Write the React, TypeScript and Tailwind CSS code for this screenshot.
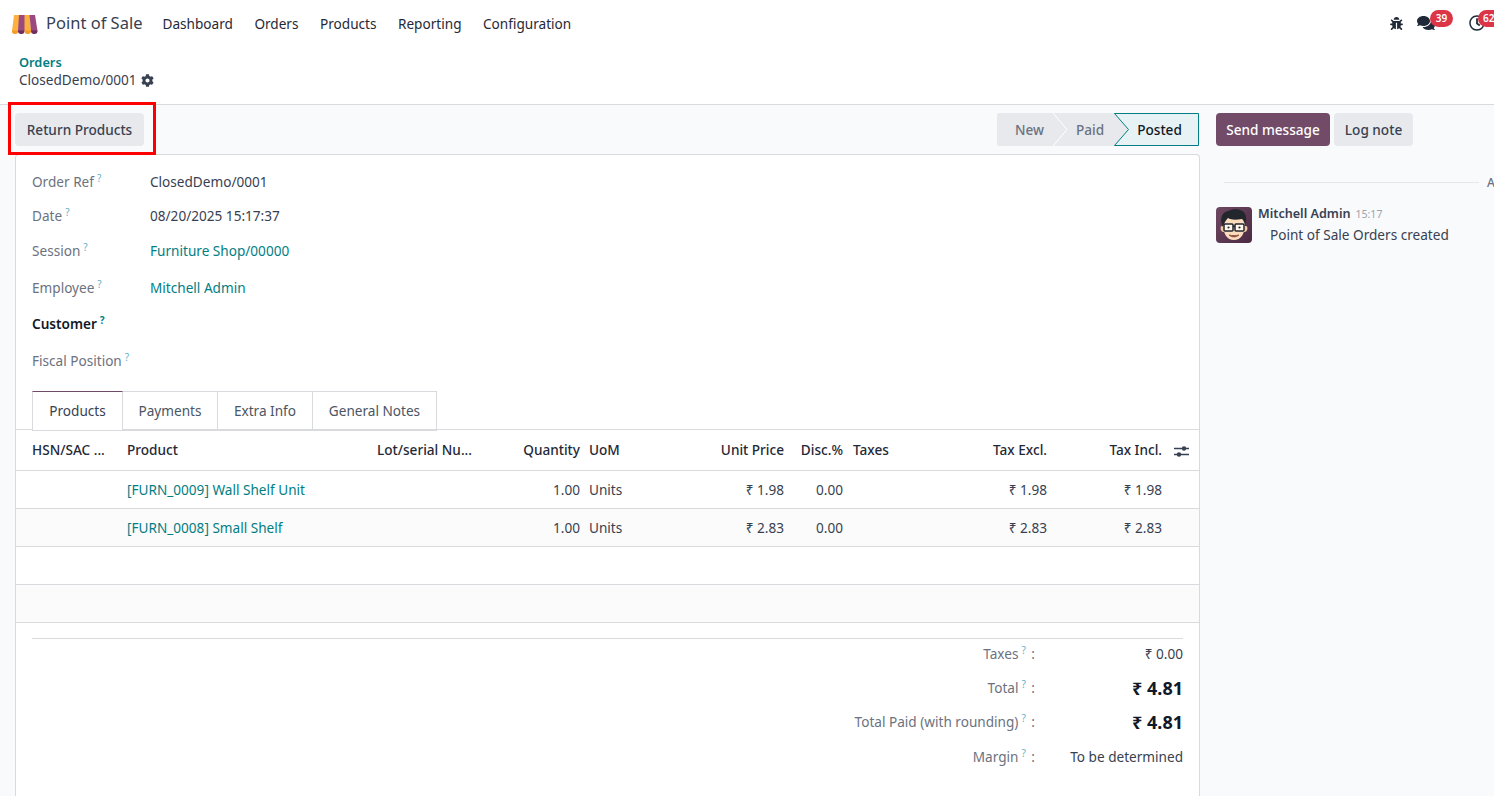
import { FaBug, FaCog, FaComments, FaRegClock } from "react-icons/fa";

const Q = ({ dark }: { dark?: boolean }) => (
  <sup className={`ml-[3px] text-[10px] -top-[5px] ${dark ? "text-[#017e84] font-bold" : "text-[#5fb3c8]"}`}>?</sup>
);

const Field = ({ label, value, link, h, bold }: { label: string; value?: string; link?: boolean; h: string; bold?: boolean }) => (
  <div className={`flex items-center ${h}`}>
    <div className={`w-[118px] ${bold ? "font-semibold text-[#111827]" : "text-[#6b7280]"}`}>
      {label}
      <Q dark={bold} />
    </div>
    {value && <div className={link ? "text-[#017e84]" : "text-[#374151]"}>{value}</div>}
  </div>
);

const grid = "grid grid-cols-[95px_250px_111px_92px_80px_124px_59px_97px_107px_115px_37px] pl-4";

const Row = ({ name, price, alt }: { name: string; price: string; alt?: boolean }) => (
  <div className={`${grid} h-[38px] pt-[2px] items-center border-b border-[#d8dadd] ${alt ? "bg-[#fbfbfb]" : ""}`}>
    <div />
    <div className="text-[#017e84] whitespace-nowrap">{name}</div>
    <div />
    <div className="text-right">1.00</div>
    <div className="pl-[9px]">Units</div>
    <div className="text-right">₹ {price}</div>
    <div className="text-right">0.00</div>
    <div />
    <div className="text-right">₹ {price}</div>
    <div className="text-right">₹ {price}</div>
    <div />
  </div>
);

const Total = ({ label, value, big, h }: { label: string; value: string; big?: boolean; h: string }) => (
  <div className={`flex items-center justify-end ${h}`}>
    <div className="text-[#6b7280] whitespace-nowrap">
      {label}
      <Q /> <span className="ml-[2px]">:</span>
    </div>
    <div className={`w-[148px] text-right ${big ? "text-[18px] font-bold text-[#111827]" : "text-[#374151]"}`}>{value}</div>
  </div>
);

const Tab = ({ label, w, active }: { label: string; w: string; active?: boolean }) => (
  <div
    className={`${w} h-[40px] flex items-center justify-center pt-[1px] border border-l-0 first:border-l ${
      active ? "border-[#d8dadd] border-t-[#714b67] bg-white text-[#374151] -mb-px" : "border-[#d8dadd] text-[#4b5563]"
    }`}
  >
    {label}
  </div>
);

const Avatar = () => (
  <svg viewBox="0 0 36 36" className="w-9 h-9 shrink-0 rounded-[4px]">
    <defs>
      <linearGradient id="avbg" x1="0" y1="0" x2="1" y2="1">
        <stop offset="0" stopColor="#6e4862" />
        <stop offset="1" stopColor="#4b2a42" />
      </linearGradient>
    </defs>
    <rect width="36" height="36" fill="url(#avbg)" />
    <path d="M6 19c-2 0-2 5 1 6l2 0v-6z" fill="#f3c9a3" />
    <path d="M30 19c2 0 2 5-1 6l-2 0v-6z" fill="#f3c9a3" />
    <path d="M7 16c0 11 4 17 11 17s11-6 11-17S25 8 18 8 7 8 7 16z" fill="#fbdcbd" />
    <path d="M7 20C3 12 6 5 12 4c6-3 15-2 17 3 2 3 1 8 0 11-1-3-1-4-3-6-6 1-11 1-14-1-2 2-4 5-5 9z" fill="#23262d" />
    <rect x="8" y="17" width="9" height="7" rx="1" fill="#fff8ef" stroke="#23262d" strokeWidth="1.500" />
    <rect x="19" y="17" width="9" height="7" rx="1" fill="#fff8ef" stroke="#23262d" strokeWidth="1.500" />
    <path d="M17 19.500h2" stroke="#23262d" strokeWidth="1.300" />
    <circle cx="12.500" cy="20.500" r="1.100" fill="#23262d" />
    <circle cx="23.500" cy="20.500" r="1.100" fill="#23262d" />
    <path d="M13 28c3 2.500 7 2.500 10 0-3 .8-7 .8-10 0z" fill="#8d4a3a" stroke="#8d4a3a" strokeWidth=".8" />
  </svg>
);

const Logo = () => (
  <svg viewBox="0 0 27 20" className="w-[27px] h-[20px]">
    <path d="M3 1h5.500v16H1z" fill="#fbb040" />
    <path d="M8 1h6v16H7z" fill="#9b4a80" />
    <path d="M13.500 1h5.500l1 16h-6.500z" fill="#fbb040" />
    <path d="M18.500 1h5.500l2.500 16H20z" fill="#9b4a80" />
    <path d="M1 16.500h6v1a3 2.500 0 0 1-6 0z" fill="#f59a23" />
    <path d="M7 16.500h6.500v1a3.200 2.500 0 0 1-6.500 0z" fill="#6f2f5e" />
    <path d="M13.500 16.500H20v1a3.200 2.500 0 0 1-6.500 0z" fill="#f59a23" />
    <path d="M20 16.500h6.500v1a3.200 2.500 0 0 1-6.500 0z" fill="#6f2f5e" />
  </svg>
);

export default function App() {
  return (
    <div className="relative w-[1494px] h-[796px] overflow-hidden flex flex-col bg-[#f9fafb] text-[13.6px] text-[#374151] font-['Noto_Sans',sans-serif]">
      <header className="h-12 shrink-0 bg-white flex items-center pl-[11px] overflow-hidden">
        <Logo />
        <div className="ml-[8px] pb-[2px] text-[16.5px] text-[#374151]">Point of Sale</div>
        <nav className="flex ml-[20px] gap-[21.500px] pt-[1px] text-[#1f2937]">
          <span>Dashboard</span>
          <span>Orders</span>
          <span>Products</span>
          <span>Reporting</span>
          <span>Configuration</span>
        </nav>
        <div className="ml-auto flex items-center relative w-[110px] h-full shrink-0">
          <FaBug className="absolute left-[6px] top-[17px] text-[13px] text-[#1f2937]" />
          <FaComments className="absolute left-[33px] top-[14px] text-[18px] text-[#1f2937]" />
          <span className="absolute left-[46px] top-[10px] h-[17px] w-[23px] rounded-full bg-[#dc3545] text-white text-[10px] font-semibold flex items-center justify-center">39</span>
          <FaRegClock className="absolute left-[85px] top-[15px] text-[16px] text-[#1f2937]" />
          <span className="absolute left-[94px] top-[10px] h-[17px] w-[23px] rounded-full bg-[#dc3545] text-white text-[10px] font-semibold flex items-center pl-[5px]">62</span>
        </div>
      </header>

      <div className="h-[57px] shrink-0 bg-white border-b border-[#d8dadd] pl-[19px] pt-[6px]">
        <div className="text-[12.800px] leading-[17px] font-semibold text-[#017e84]">Orders</div>
        <div className="flex items-center gap-[4px] leading-[18px]">
          ClosedDemo/0001 <FaCog className="text-[13px]" />
        </div>
      </div>

      <div className="flex flex-1 min-h-0">
        <div className="w-[1200px] shrink-0 flex flex-col">
          <div className="h-[49px] shrink-0 flex items-center justify-between pl-[15px] pr-px">
            <button className="h-[33px] w-[129px] pt-[1px] rounded-[4px] bg-[#e7e9ed] font-medium text-[#374151]">Return Products</button>
            <div className="flex h-[33px] bg-[#e7e9ed] w-[202px] -mt-px rounded-l-[2px]">
              <div className="relative w-[57px] flex items-center justify-center pl-[8px] pt-[2px] font-medium text-[#6b7280]">
                New
                <svg className="absolute left-[56px] top-0 z-10" width="15" height="33" viewBox="0 0 15 33" fill="none">
                  <path d="M0 0l14 16.500L0 33" stroke="#fff" strokeWidth="1" />
                </svg>
              </div>
              <div className="w-[60px] flex items-center justify-center pl-[12px] pt-[2px] font-medium text-[#6b7280]">Paid</div>
              <div className="relative w-[85px] flex items-center justify-center pl-[6px] pt-[2px] font-medium text-[#111827]">
                <svg className="absolute inset-0" width="85" height="33" viewBox="0 0 85 33">
                  <path d="M.5.500h84v32H.5l14-16z" fill="#e6f2f3" stroke="#017e84" strokeWidth="1" />
                </svg>
                <span className="relative">Posted</span>
              </div>
            </div>
          </div>

          <div className="flex-1 ml-[15px] bg-white border border-[#d8dadd] border-b-0 rounded-t-[4px]">
            <div className="pl-4 pt-[10px]">
              <Field label="Order Ref" value="ClosedDemo/0001" h="h-[34px]" />
              <Field label="Date" value="08/20/2025 15:17:37" h="h-[34px]" />
              <Field label="Session" value="Furniture Shop/00000" link h="h-[36px]" />
              <Field label="Employee" value="Mitchell Admin" link h="h-[37px] pt-[2px]" />
              <Field label="Customer" bold h="h-[37px]" />
              <Field label="Fiscal Position" h="h-[37px]" />
            </div>
            <div className="mt-[11px] pl-4 flex border-b border-[#d8dadd] h-[39px]">
              <Tab label="Products" w="w-[91px]" active />
              <Tab label="Payments" w="w-[95px]" />
              <Tab label="Extra Info" w="w-[95px]" />
              <Tab label="General Notes" w="w-[124px]" />
            </div>
            <div className={`${grid} h-[41px] items-center pt-[1px] border-b border-[#d8dadd] font-medium text-[#1f2937]`}>
              <div className="truncate pr-2">HSN/SAC ...</div>
              <div>Product</div>
              <div className="whitespace-nowrap">Lot/serial Nu...</div>
              <div className="text-right">Quantity</div>
              <div className="pl-[9px]">UoM</div>
              <div className="text-right">Unit Price</div>
              <div className="text-right">Disc.%</div>
              <div className="pl-[10px]">Taxes</div>
              <div className="text-right">Tax Excl.</div>
              <div className="text-right">Tax Incl.</div>
              <div className="flex justify-end pr-[10px]">
                <svg width="15" height="14" viewBox="0 0 15 14" fill="none">
                  <path d="M0 4.500h15M0 10.500h15" stroke="#374151" strokeWidth="1.300" />
                  <circle cx="10" cy="4.500" r="2.200" fill="#374151" />
                  <circle cx="5" cy="10.500" r="2.200" fill="#374151" />
                </svg>
              </div>
            </div>
            <Row name="[FURN_0009] Wall Shelf Unit" price="1.98" />
            <Row name="[FURN_0008] Small Shelf" price="2.83" alt />
            <div className="h-[38px] border-b border-[#d8dadd]" />
            <div className="h-[38px] border-b border-[#d8dadd] bg-[#fbfbfb]" />
            <div className="mx-4 mt-[15px] border-t border-[#d8dadd]">
              <Total label="Taxes" value="₹ 0.00" h="h-[31px] pb-[1px]" />
              <Total label="Total" value="₹ 4.81" big h="h-[35px] pt-[1px]" />
              <Total label="Total Paid (with rounding)" value="₹ 4.81" big h="h-[34px] pt-[1px]" />
              <Total label="Margin" value="To be determined" h="h-[34px] pt-[2px]" />
            </div>
          </div>
        </div>

        <aside className="flex-1 min-w-0 pl-4 overflow-hidden">
          <div className="h-[49px] flex items-center gap-1">
            <button className="h-[33px] w-[114px] pt-[1px] rounded-[4px] bg-[#714b67] text-white font-medium">Send message</button>
            <button className="h-[33px] w-[79px] pt-[1px] rounded-[4px] bg-[#e7e9ed] text-[#374151] font-medium">Log note</button>
          </div>
          <div className="flex items-center mt-[20px] h-[17px] ml-2 whitespace-nowrap">
            <div className="w-[255px] shrink-0 border-t border-[#e5e7eb]" />
            <span className="ml-2 text-[12px] font-medium text-[#6b7280]">Activity</span>
          </div>
          <div className="flex gap-[6px] mt-[16px]">
            <Avatar />
            <div>
              <div className="leading-[13px] text-[12.600px]">
                <span className="font-semibold">Mitchell Admin</span>
                <span className="ml-[5px] text-[10.500px] text-[#9ca3af]">15:17</span>
              </div>
              <div className="ml-3 mt-[4px] leading-[20px] whitespace-nowrap">Point of Sale Orders created</div>
            </div>
          </div>
        </aside>
      </div>

      <div className="absolute left-[8px] top-[102px] w-[148px] h-[53px] border-[3px] border-[#ff0000]" />
    </div>
  );
}
